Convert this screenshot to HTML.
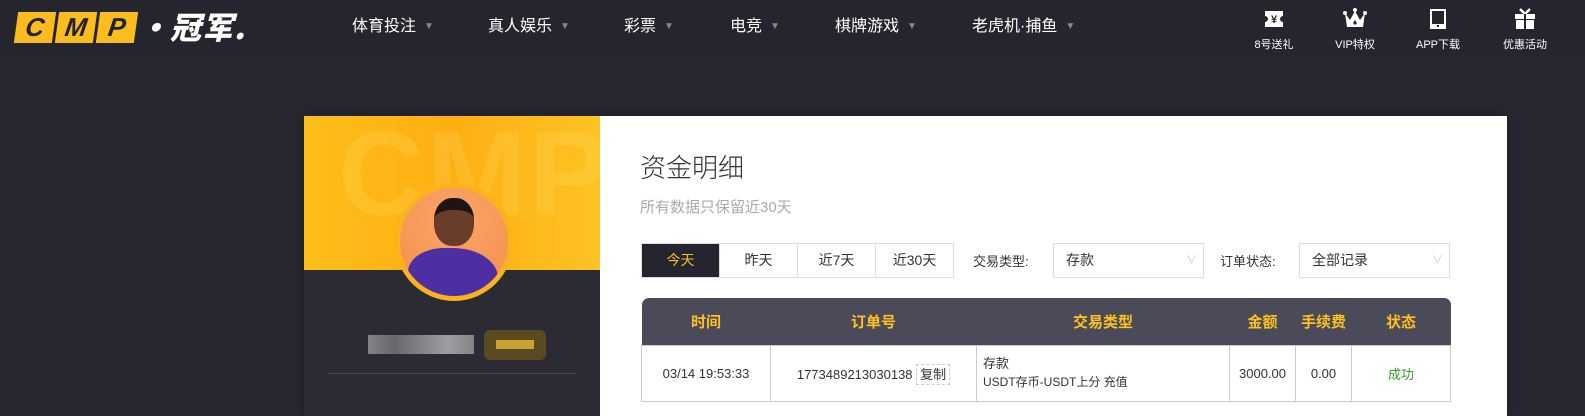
<!DOCTYPE html>
<html><head><meta charset="utf-8"><style>
*{margin:0;padding:0;box-sizing:border-box}
body{width:1585px;height:402px;overflow:hidden;background:#282831;font-family:"Liberation Sans","Noto Sans CJK SC",sans-serif;position:relative}
.nav{position:absolute;top:0;left:0;width:1585px;height:56px;background:#25252e}
.logo{position:absolute;left:16px;top:12px;display:flex;gap:3px}
.logo span{width:38px;height:31px;background:#fbbd1e;color:#222;font:italic 900 26px/31px "Liberation Sans",sans-serif;text-align:center;transform:skewX(-8deg)}
.brand{position:absolute;left:138px;top:6px;color:#fff;font:italic 900 31px/40px "Noto Sans CJK SC",sans-serif;letter-spacing:1px}
.menu{position:absolute;top:16px;font-size:16px;color:#fff;line-height:22px}
.menu i{font-style:normal;color:#888;font-size:10px;margin-left:8px;vertical-align:2px}
.ic{position:absolute;top:8px;width:60px;text-align:center;color:#fff;font-size:11px}
.ic svg{display:block;margin:0 auto 6px}
.card{position:absolute;left:304px;top:116px;width:1203px;height:300px;background:#fff;box-shadow:0 0 14px rgba(0,0,0,.35)}
.side{position:absolute;left:0;top:0;width:296px;height:300px;background:#2b2b34}
.yel{position:absolute;left:0;top:0;width:296px;height:154px;background:linear-gradient(90deg,#fdbe1a,#feaf12 50%,#fdc323);overflow:hidden}
.yel b{position:absolute;left:34px;top:-12px;font:700 120px/140px "Liberation Sans",sans-serif;color:rgba(255,225,110,.22);letter-spacing:2px}
.av{position:absolute;left:91px;top:67px;width:118px;height:118px;border-radius:50%;background:#fbb31d;padding:5px}
.av div{width:108px;height:108px;border-radius:50%;background:radial-gradient(circle at 50% 30%,#fca56a,#f28d48);overflow:hidden;position:relative}
.head{position:absolute;left:34px;top:10px;width:40px;height:48px;border-radius:45%;background:#6a3c2a;border-top:12px solid #1f1411}
.shirt{position:absolute;left:8px;top:60px;width:90px;height:60px;border-radius:40% 50% 0 0;background:#4d2fa3}
.blur1{position:absolute;left:64px;top:219px;width:106px;height:19px;background:linear-gradient(90deg,#999,#777,#999,#bbb,#999);opacity:.8}
.blur2{position:absolute;left:180px;top:214px;width:62px;height:30px;background:#5a4a22;border-radius:6px}
.blur2 i{position:absolute;left:12px;top:10px;width:38px;height:9px;background:#c9a233}
.hr{position:absolute;left:24px;top:257px;width:248px;height:1px;background:#444450}
.title{position:absolute;left:336px;top:32px;font-size:26px;color:#333;font-weight:300}
.sub{position:absolute;left:336px;top:80px;font-size:15px;color:#aaa}
.btns{position:absolute;left:337px;top:127px;display:flex;border:1px solid #ddd}
.btns div{width:78px;height:33px;line-height:33px;text-align:center;font-size:14px;color:#333;border-left:1px solid #ddd}
.btns div:first-child{border:0;background:#25252f;color:#fbbd1e;width:77px}
.lbl{position:absolute;top:135px;font-size:13px;color:#333}
.sel{position:absolute;top:127px;width:151px;height:35px;border:1px solid #ddd;font-size:14px;color:#333;line-height:33px;padding-left:12px}
.sel:after{content:"∨";position:absolute;right:6px;top:0;color:#ccc;font-size:11px}
table{position:absolute;left:337px;top:182px;width:810px;border-collapse:collapse;font-size:13px}
th{background:#4a4a58;color:#fdc21f;height:47px;font-size:15px}
th:first-child{border-top-left-radius:7px}th:last-child{border-top-right-radius:7px}
td{border:1px solid #ccc;height:56px;text-align:center;color:#333}
</style></head><body>
<div class="nav">
<div class="logo"><span>C</span><span>M</span><span>P</span></div>
<div class="brand">·冠军.</div>
<div class="menu" style="left:352px">体育投注<i>▼</i></div>
<div class="menu" style="left:488px">真人娱乐<i>▼</i></div>
<div class="menu" style="left:624px">彩票<i>▼</i></div>
<div class="menu" style="left:730px">电竞<i>▼</i></div>
<div class="menu" style="left:835px">棋牌游戏<i>▼</i></div>
<div class="menu" style="left:972px">老虎机·捕鱼<i>▼</i></div>
<div class="ic" style="left:1244px"><svg width="22" height="22"><rect x="2" y="3" width="18" height="16" fill="#fff"/><circle cx="2" cy="11" r="3" fill="#25252e"/><circle cx="20" cy="11" r="3" fill="#25252e"/><text x="11" y="15" font-size="11" font-weight="bold" text-anchor="middle" fill="#25252e">¥</text></svg>8号送礼</div>
<div class="ic" style="left:1325px"><svg width="24" height="22"><circle cx="2" cy="5" r="2" fill="#fff"/><circle cx="12" cy="2" r="2" fill="#fff"/><circle cx="22" cy="5" r="2" fill="#fff"/><path d="M2 5 L7 12 L12 3 L17 12 L22 5 L20 19 H4Z" fill="#fff"/><path d="M12 12 L14 15 L12 17 L10 15Z" fill="#25252e"/></svg>VIP特权</div>
<div class="ic" style="left:1408px"><svg width="18" height="22"><rect x="1" y="1" width="16" height="20" fill="#fff"/><rect x="3" y="3" width="12" height="13" fill="#25252e"/><rect x="8" y="17" width="2" height="2" fill="#25252e"/></svg>APP下载</div>
<div class="ic" style="left:1495px"><svg width="22" height="22"><path d="M6 1 L11 6 L16 1" stroke="#fff" stroke-width="2.5" fill="none"/><rect x="1" y="6" width="20" height="5" fill="#fff"/><rect x="2" y="12" width="18" height="9" fill="#fff"/><rect x="10" y="6" width="2" height="15" fill="#25252e"/></svg>优惠活动</div>
</div>
<div class="card">
<div class="side"><div class="yel"><b>CMP</b></div>
<div class="av"><div><span class="head"></span><span class="shirt"></span></div></div>
<div class="blur1"></div><div class="blur2"><i></i></div><div class="hr"></div></div>
<div class="title">资金明细</div>
<div class="sub">所有数据只保留近30天</div>
<div class="btns"><div>今天</div><div>昨天</div><div>近7天</div><div>近30天</div></div>
<div class="lbl" style="left:669px">交易类型:</div>
<div class="sel" style="left:749px">存款</div>
<div class="lbl" style="left:916px">订单状态:</div>
<div class="sel" style="left:995px">全部记录</div>
<table><tr><th style="width:129px">时间</th><th style="width:206px">订单号</th><th style="width:253px">交易类型</th><th style="width:66px">金额</th><th style="width:56px">手续费</th><th>状态</th></tr>
<tr><td>03/14 19:53:33</td><td>1773489213030138 <span style="border:1px dashed #ccc;padding:2px 3px">复制</span></td><td style="text-align:left;padding-left:6px;font-size:12px;line-height:18px"><span style="font-size:13px">存款</span><br>USDT存币-USDT上分 充值</td><td>3000.00</td><td>0.00</td><td style="color:#3a9a2a">成功</td></tr></table>
</div>
</body></html>
